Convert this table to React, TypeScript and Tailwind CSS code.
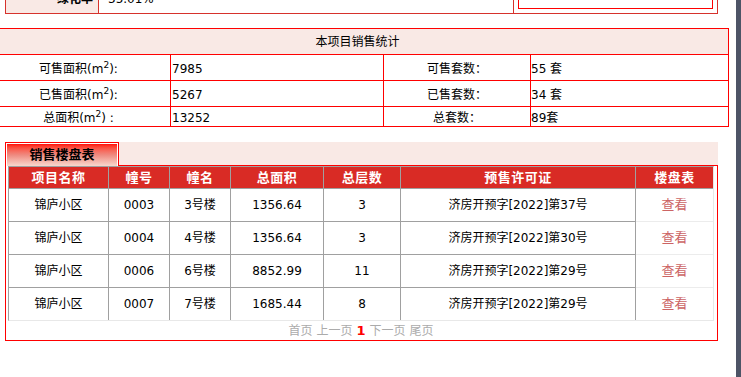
const font = { fontFamily: '"DejaVu Sans", "Noto Sans CJK SC", sans-serif' }

const statRows = [
  { a: "可售面积", aTail: "):", av: "7985", b: "可售套数：", bv: "55 套", h: "h-[26px]" },
  { a: "已售面积", aTail: "):", av: "5267", b: "已售套数：", bv: "34 套", h: "h-[26px]" },
  { a: "总面积", aTail: ") :", av: "13252", b: "总套数：", bv: "89套", h: "h-[19px]" },
]

const buildings = [
  { no: "0003", name: "3号楼", area: "1356.64", floors: "3", permit: "济房开预字[2022]第37号" },
  { no: "0004", name: "4号楼", area: "1356.64", floors: "3", permit: "济房开预字[2022]第30号" },
  { no: "0006", name: "6号楼", area: "8852.99", floors: "11", permit: "济房开预字[2022]第29号" },
  { no: "0007", name: "7号楼", area: "1685.44", floors: "8", permit: "济房开预字[2022]第29号" },
]

const cols = ["w-[100px]", "w-[61px]", "w-[61px]", "w-[93px]", "w-[77px]", "w-[235px]", "flex-1"]
const heads = ["项目名称", "幢号", "幢名", "总面积", "总层数", "预售许可证", "楼盘表"]

export default function App() {
  return (
    <div className="relative h-[377px] w-[741px] overflow-hidden bg-white text-[12px] text-black" style={font}>
      {/* page scrollbar */}
      <div className="absolute right-0 top-0 h-full w-[5px] bg-[#4d5466]" />

      {/* tail of the previous info table */}
      <div className="ml-[5px] mt-[-17px] flex h-[31px] w-[713px] border border-[#d6322c]">
        <div className="flex w-[93px] items-center justify-end border-r border-[#d6322c] bg-[#f9e9e5] pr-[5px] font-bold">
          绿化率
        </div>
        <div className="flex w-[415px] items-center border-r border-[#d6322c] pl-[9px]">35.01%</div>
        <div className="flex flex-1 flex-col justify-end px-[4px] pb-[4px]">
          <div className="relative h-[20px] border border-[#ff0000]">
            <div className="absolute right-[5px] top-0 h-[10px] w-px bg-[#dddddd]" />
          </div>
        </div>
      </div>

      {/* sales statistics */}
      <div className="ml-[-14px] mt-[14px] w-[743px] border border-[#ff0000]">
        <div className="flex h-[26px] items-center justify-center border-b border-[#ff0000] bg-[#f9e9e5]">
          本项目销售统计
        </div>
        {statRows.map((r, i) => (
          <div
            key={r.a}
            className={`flex ${r.h} ${i < statRows.length - 1 ? "border-b border-[#ff0000]" : ""}`}
          >
            <div className="flex w-[184px] items-center justify-center border-r border-[#ff0000] pt-[3px]">
              {r.a}(m<sup className="text-[9px]">2</sup>
              {r.aTail}
            </div>
            <div className="flex w-[213px] items-center border-r border-[#ff0000] pl-[1px] pt-[3px]">{r.av}</div>
            <div className="flex w-[147px] items-center justify-center border-r border-[#ff0000] pt-[3px]">{r.b}</div>
            <div className="flex flex-1 items-center pt-[3px]">{r.bv}</div>
          </div>
        ))}
      </div>

      {/* building list */}
      <div className="ml-[5px] mt-[15px] w-[713px]">
        <div className="flex h-[24px]">
          <div className="w-[114px] border-x border-t border-[#ff0000] bg-white px-px pt-px">
            <div className="flex h-full items-center justify-center bg-linear-to-b from-[#ff0000] via-[#ee8a80] to-[#f7d8ce] text-[13px] font-bold">
              销售楼盘表
            </div>
          </div>
          <div className="flex-1 border-b border-[#ff0000] bg-[#f9e9e5]" />
        </div>

        <div className="border-x border-b border-[#ff0000] pl-[2px] pr-[3px]">
          <div className="w-[706px] border-l border-t border-r border-b border-l-[#a0a0a0] border-t-[#a0a0a0] border-r-[#e8e8e8] border-b-[#e8e8e8]">
            <div className="flex h-[22px] bg-[#d92b25] text-[13px] font-bold tracking-[0.5px] text-white">
              {heads.map((h, i) => (
                <div
                  key={h}
                  className={`${cols[i]} flex items-center justify-center border-b border-[#a0a0a0] ${
                    i < heads.length - 1 ? "border-r" : ""
                  }`}
                >
                  {h}
                </div>
              ))}
            </div>
            {buildings.map((b, r) => {
              const last = r === buildings.length - 1
              const cells = ["锦庐小区", b.no, b.name, b.area, b.floors, b.permit]
              return (
                <div key={b.no} className={`flex ${last ? "h-[32px]" : "h-[33px]"}`}>
                  {cells.map((c, i) => (
                    <div
                      key={i}
                      className={`${cols[i]} flex items-center justify-center border-r border-[#a0a0a0] ${
                        last ? "" : "border-b"
                      }`}
                    >
                      {c}
                    </div>
                  ))}
                  <div
                    className={`flex flex-1 items-center justify-center text-[13px] text-[#cc6464] ${
                      last ? "" : "border-b border-[#ececec]"
                    }`}
                  >
                    查看
                  </div>
                </div>
              )
            })}
          </div>
          <div className="flex h-[19px] items-center justify-center gap-[4px] text-[12px] text-[#ababab]">
            <span>首页</span>
            <span>上一页</span>
            <span className="text-[13px] font-bold text-[#ff0000]">1</span>
            <span>下一页</span>
            <span>尾页</span>
          </div>
        </div>
      </div>
    </div>
  )
}
